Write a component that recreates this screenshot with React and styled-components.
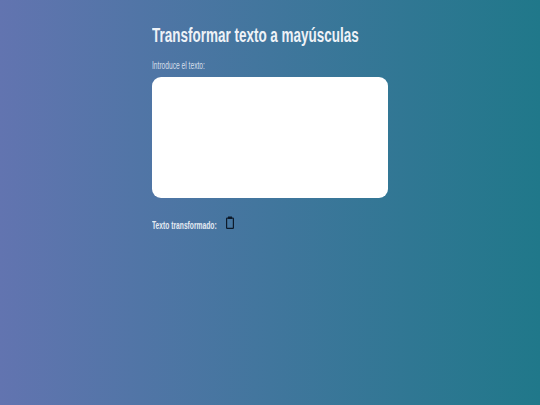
import React from "react";
import styled, { createGlobalStyle } from "styled-components";

const Global = createGlobalStyle`
  html, body { margin: 0; padding: 0; height: 100%; }
  body { font-family: "Liberation Sans", Arial, sans-serif; }
  #root { height: 100%; }
`;

const Page = styled.main`
  box-sizing: border-box;
  height: 405px;
  overflow: hidden;
  background: linear-gradient(to right, #6274b0, #20788a);
  display: flex;
  justify-content: center;
  padding-top: 24px;
`;

const Column = styled.section`
  width: 236px;
  display: flex;
  flex-direction: column;
`;

const Title = styled.h1`
  margin: 0;
  font-size: 20px;
  line-height: 23px;
  font-weight: 700;
  color: #eef2f7;
  white-space: nowrap;
  transform: scaleX(0.674);
  transform-origin: left center;
`;

const Label = styled.label`
  margin-top: 13px;
  font-size: 10px;
  line-height: 11px;
  color: #d5dfea;
  white-space: nowrap;
  transform: scaleX(0.665);
  transform-origin: left center;
`;

const Input = styled.textarea`
  margin-top: 6px;
  box-sizing: border-box;
  width: 236px;
  height: 121px;
  border: 0;
  border-radius: 9px;
  background: #fff;
  resize: none;
  display: block;
`;

const Result = styled.div`
  margin-top: 18px;
  display: flex;
  align-items: flex-end;
  gap: 9px;
`;

const ResultLabel = styled.span`
  width: 65px;
  font-size: 10px;
  line-height: 11px;
  font-weight: 700;
  color: #e4eaf2;
  white-space: nowrap;
  transform: scaleX(0.67);
  transform-origin: left center;
`;

const CopyButton = styled.button`
  border: 0;
  padding: 0;
  background: none;
  display: flex;
  width: 8px;
  height: 13px;
  margin-bottom: 2px;
`;

export default function App() {
  return (
    <Page>
      <Global />
      <Column>
        <Title>Transformar texto a mayúsculas</Title>
        <Label htmlFor="t">Introduce el texto:</Label>
        <Input id="t" />
        <Result>
          <ResultLabel>Texto transformado:</ResultLabel>
          <CopyButton aria-label="Copiar">
            <svg width="8" height="13" viewBox="0 0 8 13" fill="none">
              <rect x="0.6" y="2.1" width="6.8" height="10.3" rx="0.6" stroke="#0d1a2a" strokeWidth="1.2" />
              <rect x="2" y="0.5" width="4" height="2.5" fill="#0d1a2a" />
            </svg>
          </CopyButton>
        </Result>
      </Column>
    </Page>
  );
}
